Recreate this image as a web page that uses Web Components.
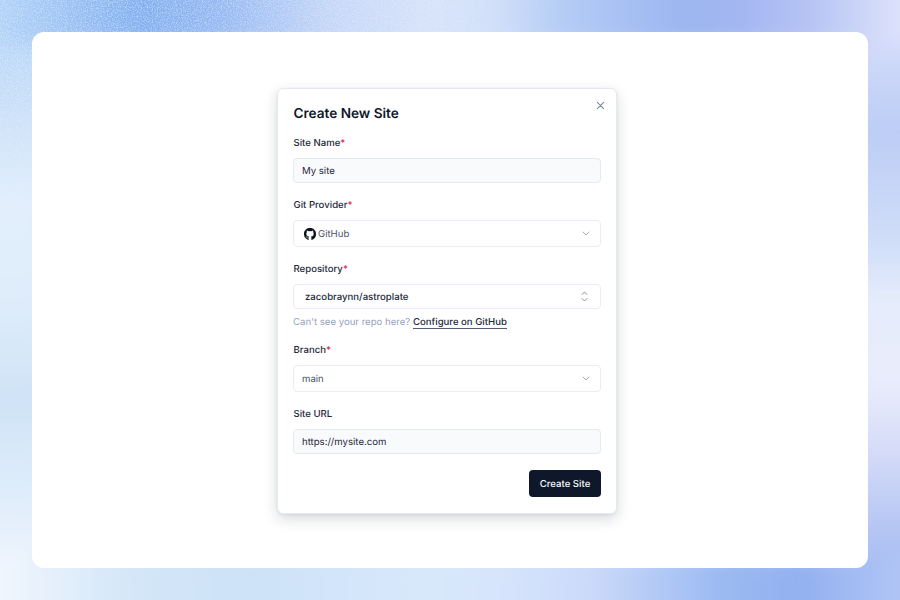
<!DOCTYPE html>
<html lang="en">
<head>
<meta charset="utf-8">
<title>Create New Site</title>
<style>
html, body { margin: 0; height: 100%; }
body { font-family: Inter, "Liberation Sans", sans-serif; color: #0f172a; text-rendering: geometricPrecision; }
p a {
  color: #1e293b;
  font-weight: 500;
  border-bottom: 1px solid #555f73;
}
</style>
</head>
<body>
<site-page>
  <site-dialog heading="Create New Site">
    <form-field label="Site Name" required>
      <text-box value="My site"></text-box>
    </form-field>
    <form-field label="Git Provider" required>
      <select-box value="GitHub" github></select-box>
    </form-field>
    <form-field label="Repository" required>
      <combo-box value="zacobraynn/astroplate"></combo-box>
      <p slot="help">Can't see your repo here? <a>Configure on GitHub</a></p>
    </form-field>
    <form-field label="Branch" required>
      <select-box value="main"></select-box>
    </form-field>
    <form-field label="Site URL">
      <text-box value="https://mysite.com"></text-box>
    </form-field>
    <primary-button slot="actions">Create Site</primary-button>
  </site-dialog>
</site-page>

<script>
// stops: [offset px along the strip, colour]
const ramp = (id, horizontal, stops) => {
  const len = horizontal ? 900 : 600;
  const s = stops.map(([o, c]) => `<stop offset='${o / len}' stop-color='${c}'/>`).join("");
  return `<linearGradient id='${id}' gradientUnits='userSpaceOnUse' x1='0' y1='0' x2='${horizontal ? 900 : 0}' y2='${horizontal ? 0 : 600}'>${s}</linearGradient>`;
};

const backdrop = `<svg xmlns='http://www.w3.org/2000/svg' width='900' height='600'><defs>
${ramp("top", true, [[0, "#b0d2f8"], [60, "#9cc3f4"], [140, "#80adf0"], [220, "#94b8f2"], [330, "#c4d6f8"], [430, "#d7e3fa"], [490, "#d2e0fa"], [560, "#b5cdf5"], [680, "#9db6f1"], [740, "#a3b6f2"], [810, "#b6c4f4"], [900, "#dde2fb"]])}
${ramp("bottom", true, [[0, "#f0f6fe"], [130, "#d4e6f8"], [250, "#cde2f8"], [430, "#d8e8fb"], [500, "#d6e4fc"], [590, "#cbdafa"], [720, "#9bbaf2"], [800, "#92b0f0"], [900, "#b0c5f5"]])}
${ramp("left", false, [[0, "#b0d2f8"], [100, "#c7def8"], [200, "#e2eefc"], [300, "#dfecfa"], [400, "#cfe3f7"], [500, "#e0edfb"], [590, "#f2f7fe"]])}
${ramp("right", false, [[0, "#dde2fb"], [130, "#bccdf6"], [240, "#cfddf8"], [300, "#e5ecfc"], [380, "#e9ecfb"], [450, "#d6dcf8"], [520, "#b8c8f4"], [590, "#a0b6f0"]])}
<filter id='soft' x='-100' y='-100' width='1100' height='800' filterUnits='userSpaceOnUse'><feGaussianBlur stdDeviation='9'/></filter>
<radialGradient id='g' gradientUnits='userSpaceOnUse' cx='0' cy='0' r='1' gradientTransform='translate(130 0) scale(440 230)'><stop offset='0' stop-color='#fff'/><stop offset='.6' stop-color='#999'/><stop offset='1' stop-color='#000'/></radialGradient>
<mask id='m'><rect width='900' height='600' fill='url(#g)'/></mask>
<filter id='n' x='0' y='0' width='100%' height='100%'><feTurbulence type='fractalNoise' baseFrequency='.8' numOctaves='2' seed='4'/><feColorMatrix values='0 0 0 0 1 0 0 0 0 1 0 0 0 0 1 1.2 0 0 0 -.48'/></filter>
</defs>
<rect width='900' height='600' fill='#dbe6fb'/>
<g filter='url(#soft)'>
<rect x='-80' y='-80' width='128' height='760' fill='url(#left)'/>
<rect x='852' y='-80' width='128' height='760' fill='url(#right)'/>
<rect x='-80' y='-80' width='1060' height='124' fill='url(#top)'/>
<rect x='-80' y='556' width='1060' height='124' fill='url(#bottom)'/>
</g>
<g mask='url(#m)'><rect width='900' height='600' filter='url(#n)'/></g></svg>`;

class SitePage extends HTMLElement {
  constructor() {
    super();
    this.shadowDOM = this.attachShadow({mode: "open"});
  }
  connectedCallback() {
    this.shadowDOM.innerHTML = `
    <style>
    :host {
      display: block;
      width: 900px;
      height: 600px;
      box-sizing: border-box;
      padding: 32px;
      overflow: hidden;
      background: #dbe6fb url("data:image/svg+xml,${encodeURIComponent(backdrop)}") no-repeat;
    }
    .window {
      height: 100%;
      background: #fff;
      border-radius: 12px;
      display: flex;
      justify-content: center;
      align-items: flex-start;
      padding: 56px 6px 0 0;
      box-sizing: border-box;
    }
    </style>
    <div class="window"><slot></slot></div>`;
  }
}

class SiteDialog extends HTMLElement {
  constructor() {
    super();
    this.shadowDOM = this.attachShadow({mode: "open"});
  }
  connectedCallback() {
    this.shadowDOM.innerHTML = `
    <style>
    :host {
      display: block;
      position: relative;
      width: 340px;
      height: 426px;
      box-sizing: border-box;
      padding: 15px 15px 0;
      background: #fff;
      border: 1px solid #e6e9ef;
      border-radius: 6px;
      box-shadow: 0 5px 14px rgba(15,23,42,.16), 0 1px 3px rgba(15,23,42,.06);
    }
    h2 {
      margin: 0;
      padding-left: .5px;
      height: 18px;
      line-height: 20px;
      font-size: 13.6px;
      font-weight: 600;
      color: #0f172a;
    }
    .close {
      position: absolute;
      top: 12px;
      right: 11px;
      width: 9px;
      height: 9px;
      display: block;
    }
    .fields { display: flex; flex-direction: column; margin-top: 13px; }
    .actions { display: flex; justify-content: flex-end; margin-top: 16px; }
    </style>
    <h2>${this.getAttribute("heading")}</h2>
    <svg class="close" viewBox="0 0 10 10" fill="none" stroke="#7c8797" stroke-width="1.2" stroke-linecap="round"><path d="M1.5 1.5l7 7M8.5 1.5l-7 7"/></svg>
    <div class="fields"><slot></slot></div>
    <div class="actions"><slot name="actions"></slot></div>`;
  }
}

class FormField extends HTMLElement {
  constructor() {
    super();
    this.shadowDOM = this.attachShadow({mode: "open"});
  }
  connectedCallback() {
    const star = this.hasAttribute("required") ? "<span>*</span>" : "";
    this.shadowDOM.innerHTML = `
    <style>
    :host { display: block; margin-bottom: 14px; }
    :host(:last-of-type) { margin-bottom: 0; }
    label {
      display: block;
      padding-left: .5px;
      height: 14px;
      line-height: 17px;
      margin-bottom: 9px;
      font-size: 9.6px;
      font-weight: 500;
      color: #1e293b;
    }
    span { color: #e11d48; }
    ::slotted(p) {
      margin: 6px 0 0;
      height: 13px;
      line-height: 15px;
      font-size: 9.6px;
      color: #94a3c0;
    }
    </style>
    <label>${this.getAttribute("label")}${star}</label>
    <slot></slot>
    <slot name="help"></slot>`;
  }
}

class TextBox extends HTMLElement {
  constructor() {
    super();
    this.shadowDOM = this.attachShadow({mode: "open"});
  }
  connectedCallback() {
    this.shadowDOM.innerHTML = `
    <style>
    :host {
      display: flex;
      align-items: center;
      height: 25px;
      box-sizing: border-box;
      padding: 1px 8px 0;
      background: #f9fafc;
      border: 1px solid #e5e9f0;
      border-radius: 4px;
      font-size: 9.6px;
      color: #1e293b;
    }
    </style>
    ${this.getAttribute("value")}`;
  }
}

class SelectBox extends HTMLElement {
  constructor() {
    super();
    this.shadowDOM = this.attachShadow({mode: "open"});
  }
  connectedCallback() {
    const logo = this.hasAttribute("github") ? `
      <svg class="logo" viewBox="0 0 16 16" fill="#0d1117" stroke="#0d1117" stroke-width=".4"><path d="M8 0C3.58 0 0 3.58 0 8c0 3.54 2.29 6.53 5.47 7.59.4.07.55-.17.55-.38 0-.19-.01-.82-.01-1.49-2.01.37-2.53-.49-2.69-.94-.09-.23-.48-.94-.82-1.13-.28-.15-.68-.52-.01-.53.63-.01 1.08.58 1.23.82.72 1.21 1.87.87 2.33.66.07-.52.28-.87.51-1.07-1.78-.2-3.64-.89-3.64-3.95 0-.87.31-1.59.82-2.15-.08-.2-.36-1.02.08-2.12 0 0 .67-.21 2.2.82.64-.18 1.32-.27 2-.27s1.36.09 2 .27c1.53-1.04 2.2-.82 2.2-.82.44 1.1.16 1.92.08 2.12.51.56.82 1.27.82 2.15 0 3.07-1.87 3.75-3.65 3.95.29.25.54.73.54 1.48 0 1.07-.01 1.93-.01 2.2 0 .21.15.46.55.38A8.01 8.01 0 0 0 16 8c0-4.42-3.58-8-8-8z"/></svg>` : "";
    this.shadowDOM.innerHTML = `
    <style>
    :host {
      display: flex;
      align-items: center;
      height: 27px;
      box-sizing: border-box;
      padding: 1px 10px 0 8px;
      background: #fff;
      border: 1px solid #e9edf3;
      border-radius: 4px;
      font-size: 9.6px;
      color: #475569;
    }
    .logo { width: 12px; height: 12px; margin: 0 2px 0 2px; flex: none; }
    .value { flex: 1; }
    .chev { width: 8px; height: 5px; flex: none; margin-top: -1px; }
    </style>
    ${logo}
    <span class="value">${this.getAttribute("value")}</span>
    <svg class="chev" viewBox="0 0 8 5" fill="none" stroke="#9aa4b2" stroke-width=".9" stroke-linecap="round" stroke-linejoin="round"><path d="M1 1l3 3 3-3"/></svg>`;
  }
}

class ComboBox extends HTMLElement {
  constructor() {
    super();
    this.shadowDOM = this.attachShadow({mode: "open"});
  }
  connectedCallback() {
    this.shadowDOM.innerHTML = `
    <style>
    :host {
      display: flex;
      align-items: center;
      height: 25px;
      box-sizing: border-box;
      padding: 0 12px 0 11px;
      background: #fff;
      border: 1px solid #e9edf3;
      border-radius: 4px;
      font-size: 9.6px;
      font-weight: 500;
      color: #1e293b;
    }
    .value { flex: 1; padding-top: 1px; }
    svg { width: 7px; height: 11px; flex: none; }
    </style>
    <span class="value">${this.getAttribute("value")}</span>
    <svg viewBox="0 0 7 11" fill="none" stroke="#7b8696" stroke-width=".9" stroke-linecap="round" stroke-linejoin="round"><path d="M1 3.5L3.5 1 6 3.5M1 7.5L3.5 10 6 7.5"/></svg>`;
  }
}

class PrimaryButton extends HTMLElement {
  constructor() {
    super();
    this.shadowDOM = this.attachShadow({mode: "open"});
  }
  connectedCallback() {
    this.shadowDOM.innerHTML = `
    <style>
    :host {
      display: flex;
      align-items: center;
      justify-content: center;
      width: 72px;
      height: 27px;
      box-sizing: border-box;
      padding-top: 1px;
      background: #0f172a;
      border-radius: 4px;
      font-size: 9.6px;
      font-weight: 500;
      color: #f8fafc;
    }
    </style>
    <slot></slot>`;
  }
}

customElements.define("site-page", SitePage);
customElements.define("site-dialog", SiteDialog);
customElements.define("form-field", FormField);
customElements.define("text-box", TextBox);
customElements.define("select-box", SelectBox);
customElements.define("combo-box", ComboBox);
customElements.define("primary-button", PrimaryButton);
</script>
</body>
</html>
